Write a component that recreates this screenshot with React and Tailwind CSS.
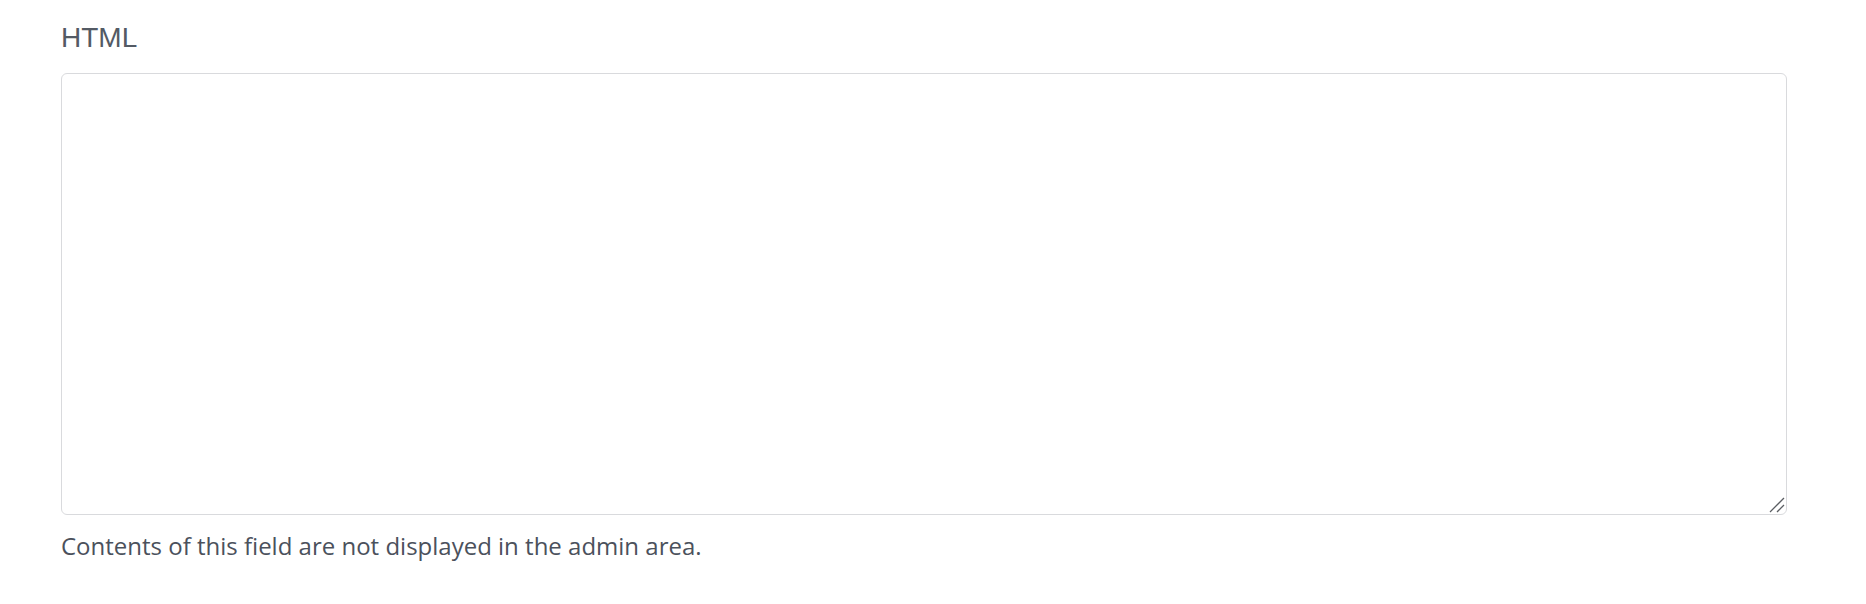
export default function App() {
  return (
    <div className="min-h-screen bg-white pl-[61px] pr-[79px] pt-[18px]">
      <label
        htmlFor="html-field"
        className="block text-[28px] leading-[40px] text-[#535a64]"
        style={{ fontFamily: '"Liberation Sans", Arial, sans-serif' }}
      >
        HTML
      </label>
      <div className="relative mt-[15px]">
        <textarea
          id="html-field"
          className="block h-[442px] w-full resize-none rounded-[6px] border-[1.5px] border-[#d9dadd] bg-white p-3 outline-none"
        />
        {/* resize grip */}
        <svg
          className="pointer-events-none absolute bottom-[2px] right-[2px]"
          width="17"
          height="17"
          viewBox="0 0 17 17"
        >
          <path d="M2 16 L16 2 M9 16 L16 9" stroke="#5b5e63" strokeWidth="1.3" />
        </svg>
      </div>
      <p
        className="mt-[13px] text-[24px] leading-[36px] text-[#4b515c]"
        style={{ fontFamily: '"Open Sans", sans-serif' }}
      >
        Contents of this field are not displayed in the admin area.
      </p>
    </div>
  );
}
